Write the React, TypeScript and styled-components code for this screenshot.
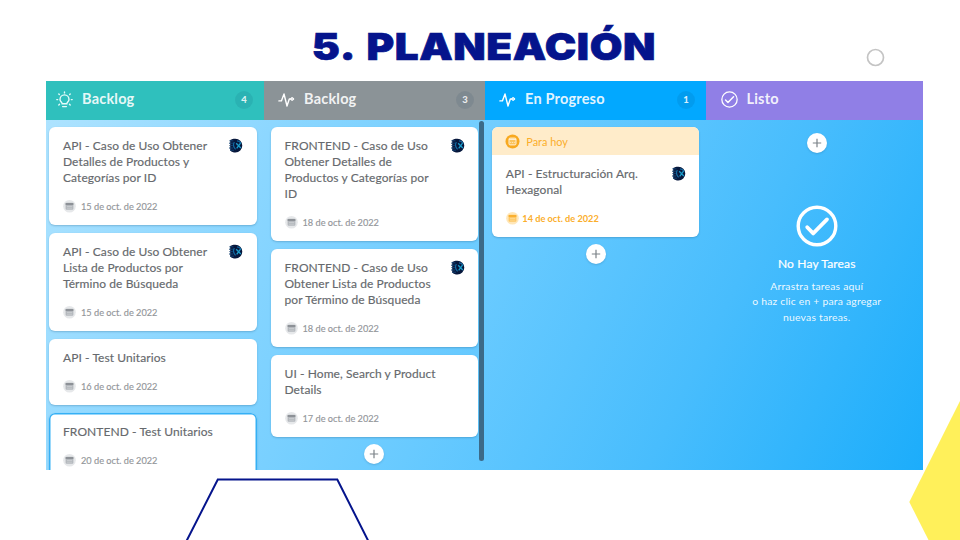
import React from "react";
import styled, { createGlobalStyle, css } from "styled-components";

const GlobalStyle = createGlobalStyle`
  * { box-sizing: border-box; }
  body { margin: 0; background: #fff; overflow: hidden; }
`;

const Slide = styled.main`
  position: relative;
  width: 960px;
  height: 540px;
  overflow: hidden;
  background: #fff;
  font-family: Lato, "Open Sans", sans-serif;
`;

const Title = styled.h1`
  display: flex;
  justify-content: center;
  align-items: center;
  margin: 0;
  height: 81px;
  padding: 13px 0 0 7px;
  font: 900 37.5px/48px Inter, sans-serif;
  letter-spacing: 0.5px;
  word-spacing: 3.5px;
  color: #05148c;
  white-space: pre;
  transform: scaleX(1.125);
  -webkit-text-stroke: 0.7px #05148c;
`;

const Decoration = styled.svg`
  position: absolute;
  inset: 0;
  pointer-events: none;
`;

const Board = styled.section`
  display: grid;
  grid-template-columns: 218px 221px 221px 216.5px;
  width: 876.5px;
  height: 389px;
  margin-left: 46px;
  overflow: hidden;
  background: linear-gradient(116deg, #b0e4ff 0%, #8ad6ff 25%, #68caff 51%, #48bdfd 74%, #1cadfb 100%);
`;

const Column = styled.div`
  display: flex;
  flex-direction: column;
  min-width: 0;
  height: 389px;
`;

const Header = styled.header<{ $color: string; $inset: number }>`
  display: flex;
  align-items: center;
  flex: none;
  height: 39px;
  padding: 0 11px 2px ${(p) => p.$inset}px;
  gap: 9px;
  background: ${(p) => p.$color};
  color: #fff;
`;

const HeaderTitle = styled.h2`
  flex: 1;
  margin: -1px 0 0;
  font-size: 14.5px;
  font-weight: 700;
  line-height: 20px;
  letter-spacing: 0.2px;
  color: rgba(255, 255, 255, 0.9);
`;

const Count = styled.span`
  display: grid;
  place-items: center;
  width: 18px;
  height: 18px;
  border-radius: 50%;
  background: rgba(0, 40, 80, 0.09);
  font-size: 9.5px;
  font-weight: 900;
  color: rgba(255, 255, 255, 0.85);
`;

const Content = styled.div`
  display: flex;
  flex: 1;
  min-height: 0;
`;

const CardList = styled.div<{ $inset: number }>`
  display: flex;
  flex-direction: column;
  flex: none;
  gap: 8px;
  width: 207.5px;
  margin-left: ${(p) => p.$inset}px;
  padding-top: 7px;
`;

const ScrollThumb = styled.div`
  width: 5px;
  height: 340px;
  margin: 1px 0 0 1px;
  border-radius: 3px;
  background: #3c6a88;
`;

const CardBox = styled.article<{ $selected?: boolean }>`
  flex: none;
  overflow: hidden;
  border-radius: 6px;
  background: #fff;
  box-shadow: 0 1px 2px rgba(30, 90, 130, 0.3);
  ${(p) =>
    p.$selected &&
    css`
      box-shadow: inset 0 0 0 1.5px #35b0f5, 0 1px 2px rgba(30, 90, 130, 0.3);
    `}
`;

const Banner = styled.div`
  display: flex;
  align-items: center;
  gap: 6.5px;
  height: 28px;
  padding-left: 13px;
  background: #ffecca;
  color: #fbae2b;
  font-size: 10.9px;
`;

const CardBody = styled.div`
  padding: 11px 13.5px 10px 14px;
`;

const CardTop = styled.div`
  display: flex;
  justify-content: space-between;
`;

const CardTitle = styled.h3`
  margin: 0;
  font-size: 12px;
  font-weight: 400;
  line-height: 16px;
  letter-spacing: 0.08px;
  color: #66696d;
  white-space: pre;
  -webkit-text-stroke: 0.15px #66696d;
`;

const DateRow = styled.div<{ $due?: boolean }>`
  display: flex;
  align-items: center;
  gap: ${(p) => (p.$due ? 3.5 : 5)}px;
  height: 16px;
  margin-top: 12px;
  margin-bottom: 1px;
  font-size: 9.2px;
  font-weight: ${(p) => (p.$due ? 700 : 400)};
  color: ${(p) => (p.$due ? "#fbae2b" : "#93969a")};
  -webkit-text-stroke: ${(p) => (p.$due ? 0 : 0.15)}px #93969a;
`;

const AddButton = styled.button`
  display: grid;
  place-items: center;
  align-self: center;
  flex: none;
  width: 20px;
  height: 20px;
  margin: -1px 0 0;
  padding: 0;
  border: 0;
  border-radius: 50%;
  background: #fff;
  box-shadow: 0 1px 2px rgba(30, 90, 130, 0.25);
`;

const EmptyColumn = styled.div`
  display: flex;
  flex-direction: column;
  align-items: center;
  width: 100%;
  padding: 14px 0 0 5px;
  color: #fff;
  text-align: center;
`;

const EmptyIcon = styled.div`
  height: 42px;
  margin-top: 52px;
`;

const EmptyTitle = styled.h3`
  margin: 9px 0 0;
  font-size: 12px;
  font-weight: 400;
  line-height: 16px;
  letter-spacing: 0.15px;
  -webkit-text-stroke: 0.2px #fff;
`;

const EmptyText = styled.p`
  margin: 7px 0 0;
  font-size: 10.4px;
  line-height: 15.3px;
  letter-spacing: 0.2px;
  white-space: pre;
  color: rgba(255, 255, 255, 0.92);
`;

const BulbIcon = () => (
  <svg width="17" height="18" viewBox="0 0 17 18" fill="none" stroke="#e6fbfa" strokeWidth="1.4" strokeLinecap="round">
    <path d="M6.2 12.8c0-1.6-2.2-2.1-2.2-4.4a4.5 4.5 0 0 1 9 0c0 2.3-2.2 2.8-2.2 4.4z" />
    <path d="M6.6 15.6h3.8M8.5 1.9V1M3.3 3.5 2.8 3M13.7 3.5l.5-.5M1.7 8.6h-.9M16.2 8.6h-.9M3.5 13.2l-.7.7M13.5 13.2l.7.7" />
  </svg>
);

const PulseIcon = () => (
  <svg width="17" height="16" viewBox="0 0 17 16" fill="none" stroke="#fff" strokeWidth="1.4" strokeLinecap="round" strokeLinejoin="round">
    <path d="M.9 8.9h2.5L6 2l3 12 2.3-7h1.3" />
    <circle cx="14.2" cy="7" r="1.4" fill="#fff" fillOpacity=".7" strokeWidth="1" />
  </svg>
);

const CheckCircle = ({ size, stroke }: { size: number; stroke: number }) => (
  <svg width={size} height={size} viewBox="0 0 42 42" fill="none" stroke="#fff" strokeWidth={stroke}>
    <circle cx="21" cy="21" r={20.5 - stroke / 2} />
    <path d="m11.2 22.2 6 6.2 13.8-14" strokeLinecap="round" strokeLinejoin="round" strokeWidth={stroke * 1.1} />
  </svg>
);

const Calendar = ({ due }: { due?: boolean }) => (
  <svg width="13" height="14" viewBox="0 0 13 14">
    <circle cx="6.5" cy="7.2" r="6.3" fill={due ? "#ffe7b9" : "#e6e8ea"} />
    <rect x="2.6" y="3.8" width="7.8" height="7" rx="1" fill={due ? "#fdc765" : "#b4b8bd"} />
    <path d="M2.6 5h7.8" stroke={due ? "#f9a91e" : "#80858b"} strokeWidth="1.6" />
    <path d="M4 7.5h5.2M4 9.2h5.2" stroke={due ? "#ffe0a0" : "#d4d7da"} strokeWidth=".6" />
  </svg>
);

const BannerCalendar = () => (
  <svg width="15" height="15" viewBox="0 0 15 15" fill="none">
    <circle cx="7.5" cy="7.5" r="7" fill="#f8a91f" />
    <rect x="4" y="4.1" width="7" height="6.8" rx="1.1" fill="#fbc35c" stroke="#fff1d8" strokeWidth="1" />
    <path d="M4 5.4h7" stroke="#fff1d8" strokeWidth="1" />
    <path d="M5.2 8.4h4.6" stroke="#fff1d8" strokeWidth=".8" strokeDasharray="1 .8" />
  </svg>
);

const Avatar = () => (
  <svg width="15" height="16" viewBox="0 0 15 16" fill="none">
    <path d="M2.2 2C4 .9 5.8.6 7.4.7a6.9 6.9 0 0 1 0 13.8c-2 0-3.8-.6-5.2-2z" fill="#06173c" />
    <path d="M1.4 2.8h4M1 5.2h4M1.4 7.6h3.4M1 10h4M2 12.2h4" stroke="#134272" strokeWidth="1" />
    <path d="M8.2 5.2l4.6 4.8M12.9 4.7 8.7 10.4" stroke="#1b9ccb" strokeWidth="1.3" />
    <path d="M6.3 4c-1.6 2.8-.5 5.5 1.3 7.4M9 2.8c1.7.1 3.2 1 3.9 2.4" stroke="#1268a0" strokeWidth="1.2" />
  </svg>
);

const Add = () => (
  <AddButton aria-label="Agregar tarea">
    <svg width="10" height="10" viewBox="0 0 10 10" stroke="#7b8288" strokeWidth="1.2">
      <path d="M5 .8v8.4M.8 5h8.4" />
    </svg>
  </AddButton>
);

type Task = { title: string; date: string; avatar?: boolean; due?: boolean; selected?: boolean };

const Card = ({ title, date, avatar, due, selected }: Task) => (
  <CardBox $selected={selected}>
    {due && (
      <Banner>
        <BannerCalendar />
        Para hoy
      </Banner>
    )}
    <CardBody>
      <CardTop>
        <CardTitle>{title}</CardTitle>
        {avatar && <Avatar />}
      </CardTop>
      <DateRow $due={due}>
        <Calendar due={due} />
        {date}
      </DateRow>
    </CardBody>
  </CardBox>
);

const pending: Task[] = [
  { title: "API - Caso de Uso Obtener\nDetalles de Productos y\nCategorías por ID", date: "15 de oct. de 2022", avatar: true },
  { title: "API - Caso de Uso Obtener\nLista de Productos por\nTérmino de Búsqueda", date: "15 de oct. de 2022", avatar: true },
  { title: "API - Test Unitarios", date: "16 de oct. de 2022" },
  { title: "FRONTEND - Test Unitarios", date: "20 de oct. de 2022", selected: true },
];

const frontend: Task[] = [
  { title: "FRONTEND - Caso de Uso\nObtener Detalles de\nProductos y Categorías por\nID", date: "18 de oct. de 2022", avatar: true },
  { title: "FRONTEND - Caso de Uso\nObtener Lista de Productos\npor Término de Búsqueda", date: "18 de oct. de 2022", avatar: true },
  { title: "UI - Home, Search y Product\nDetails", date: "17 de oct. de 2022" },
];

export default function App() {
  return (
    <>
      <GlobalStyle />
      <Slide>
        <Title>5. PLANEACIÓN</Title>
        <Board>
          <Column>
            <Header $color="#2fc0bd" $inset={10}>
              <BulbIcon />
              <HeaderTitle>Backlog</HeaderTitle>
              <Count>4</Count>
            </Header>
            <Content>
              <CardList $inset={3}>
                {pending.map((t) => <Card key={t.title} {...t} />)}
              </CardList>
            </Content>
          </Column>
          <Column>
            <Header $color="#8b9397" $inset={14}>
              <PulseIcon />
              <HeaderTitle>Backlog</HeaderTitle>
              <Count>3</Count>
            </Header>
            <Content>
              <CardList $inset={6.5}>
                {frontend.map((t) => <Card key={t.title} {...t} />)}
                <Add />
              </CardList>
              <ScrollThumb />
            </Content>
          </Column>
          <Column>
            <Header $color="#02a8ff" $inset={14}>
              <PulseIcon />
              <HeaderTitle>En Progreso</HeaderTitle>
              <Count>1</Count>
            </Header>
            <Content>
              <CardList $inset={6.8}>
                <Card title={"API - Estructuración Arq.\nHexagonal"} date="14 de oct. de 2022" avatar due />
                <Add />
              </CardList>
            </Content>
          </Column>
          <Column>
            <Header $color="#907fe6" $inset={14.5}>
              <CheckCircle size={17} stroke={3.2} />
              <HeaderTitle>Listo</HeaderTitle>
            </Header>
            <Content>
              <EmptyColumn>
                <Add />
                <EmptyIcon>
                  <CheckCircle size={42} stroke={3.4} />
                </EmptyIcon>
                <EmptyTitle>No Hay Tareas</EmptyTitle>
                <EmptyText>{"Arrastra tareas aquí\no haz clic en + para agregar\nnuevas tareas."}</EmptyText>
              </EmptyColumn>
            </Content>
          </Column>
        </Board>
        <Decoration width="960" height="540" viewBox="0 0 960 540" fill="none">
          <circle cx="875.5" cy="57.5" r="8" stroke="#c4c4c4" strokeWidth="1.7" />
          <path d="M186.5 541 217.8 479.5H337.3L368.3 541" stroke="#05148c" strokeWidth="2" />
          <path d="M960 401 909.3 502 928.5 540H960z" fill="#fff05a" />
        </Decoration>
      </Slide>
    </>
  );
}
